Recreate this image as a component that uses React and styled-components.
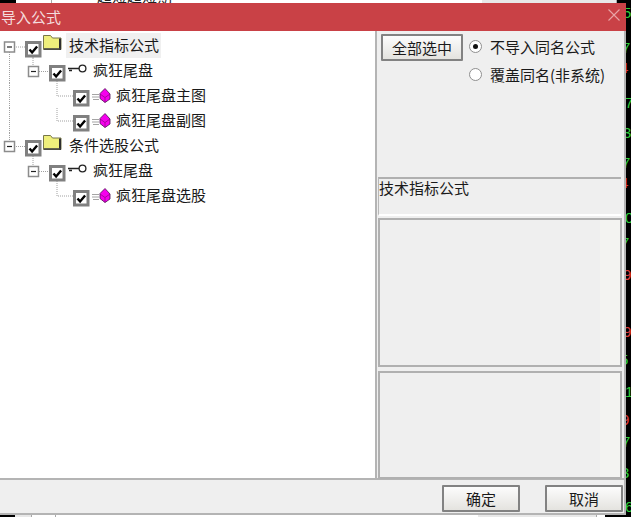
import React from "react";
import styled, { createGlobalStyle } from "styled-components";

const Global = createGlobalStyle`
  html, body { margin: 0; padding: 0; background: #000; }
  body { width: 631px; height: 517px; overflow: hidden; font-family: "Noto Sans CJK SC", "Liberation Sans", sans-serif; }
`;

const Page = styled.div`
  width: 631px;
  height: 517px;
  display: flex;
  flex-direction: column;
  background: #000;
  overflow: hidden;
`;
const Peek = styled.div`
  height: ${p => p.$h}px;
  flex: none;
  display: flex;
  overflow: hidden;
`;
const PeekCell = styled.div`
  width: ${p => p.$w}px;
  flex: none;
  box-sizing: border-box;
  background: ${p => p.$bg};
  border-right: ${p => (p.$tick ? "1px solid #a8a8a8" : "none")};
`;
const PeekText = styled.div`
  width: ${p => p.$w}px;
  flex: none;
  background: #fff;
  color: #222;
  font-size: 15px;
  line-height: 15px;
  margin-top: -12px;
  height: 15px;
  white-space: nowrap;
`;
const Middle = styled.div`
  display: flex;
  height: 512px;
  flex: none;
`;
const Dialog = styled.div`
  width: 626px;
  flex: none;
  display: flex;
  flex-direction: column;
  background: #efefef;
`;
const Ticker = styled.div`
  width: 5px;
  flex: none;
  background: #000;
  overflow: hidden;
`;
const Digit = styled.div`
  color: ${p => p.$c};
  font: 15px "Liberation Sans", sans-serif;
  line-height: 16px;
  height: 16px;
  margin-top: ${p => p.$gap}px;
  margin-left: ${p => p.$left}px;
`;
const TitleBar = styled.div`
  height: 28px;
  flex: none;
  background: #c94146;
  color: #f4dcdd;
  font-size: 15px;
  line-height: 26px;
  padding: 0 6px 0 1px;
  display: flex;
  align-items: center;
  justify-content: space-between;
`;
const Close = styled.svg`
  width: 12px;
  height: 12px;
  margin-bottom: 4px;
`;
const Content = styled.div`
  flex: 1;
  display: flex;
  flex-direction: column;
  border-right: 2px solid #b4b4b4;
`;
const Body = styled.div`
  height: 449px;
  flex: none;
  display: flex;
  border-bottom: 2px solid #b4b4b4;
  box-sizing: border-box;
`;
const TreePanel = styled.div`
  width: 377px;
  flex: none;
  box-sizing: border-box;
  background: #fff;
  border-right: 2px solid #b4b4b4;
  padding-top: 2px;
`;
const Row = styled.div`
  height: 25px;
  display: flex;
  align-items: flex-start;
  font-size: 15px;
  color: #1a1a1a;
`;
const Guide = styled.svg`
  flex: none;
  height: 25px;
  display: block;
  overflow: visible;
`;
const Label = styled.span`
  height: 25px;
  line-height: 24px;
  padding: 0 2px 0 3px;
  white-space: nowrap;
  background: ${p => (p.$selected ? "#f0f0f0" : "transparent")};
`;
const RightPanel = styled.div`
  flex: 1;
  display: flex;
  flex-direction: column;
  padding: 3px 0 0 1px;
`;
const OptionsRow = styled.div`
  height: 143px;
  flex: none;
  display: flex;
  padding-left: 3px;
`;
const PushButton = styled.button`
  width: ${p => p.$w}px;
  height: 27px;
  padding: 0;
  box-sizing: border-box;
  border: 2px solid #828282;
  border-radius: 1px;
  background: linear-gradient(#fcfcfc, #e4e3df);
  color: #1a1a1a;
  font: 15px "Noto Sans CJK SC", sans-serif;
  line-height: 22px;
`;
const RadioColumn = styled.div`
  margin-left: 6px;
  display: flex;
  flex-direction: column;
  gap: 3px;
`;
const RadioRow = styled.div`
  height: 25px;
  display: flex;
  align-items: center;
  gap: 8px;
  font-size: 15px;
  color: #1a1a1a;
  white-space: nowrap;
`;
const RadioDot = styled.span`
  width: 13px;
  height: 13px;
  box-sizing: border-box;
  border-radius: 50%;
  border: 1.5px solid #8f8f8f;
  background: #fff;
  display: flex;
  align-items: center;
  justify-content: center;
  &::after {
    content: "";
    width: 5px;
    height: 5px;
    border-radius: 50%;
    background: ${p => (p.$on ? "#111" : "transparent")};
  }
`;
const Group = styled.div`
  width: 243px;
  height: 39px;
  flex: none;
  box-sizing: border-box;
  border-top: 2px solid #b0b0b0;
  border-left: 1px solid #b8b8b8;
  border-bottom: 2px solid #fff;
  font-size: 15px;
  line-height: 17px;
  color: #1a1a1a;
`;
const Well = styled.div`
  margin-top: ${p => p.$top}px;
  height: ${p => p.$h}px;
  width: 244px;
  flex: none;
  box-sizing: border-box;
  border: 2px solid #b0b0b0;
  display: flex;
  justify-content: flex-end;
  background: #efefef;
`;
const WellStrip = styled.div`
  width: 20px;
  background: #f3f3f1;
`;
const Footer = styled.div`
  flex: 1;
  display: flex;
  justify-content: flex-end;
  align-items: flex-start;
  gap: 25px;
  padding: 5px 1px 0 0;
  border-bottom: 2px solid #b4b4b4;
`;

const Expander = ({ x, y = 8 }) => (
  <g>
    <rect x={x + 0.5} y={y + 0.5} width="10" height="10" fill="#fff" stroke="#8c8c8c" strokeWidth="1.5" />
    <path d={`M${x + 3} ${y + 5.5}h5`} stroke="#222" strokeWidth="1.2" />
  </g>
);
const Dots = ({ d }) => <path d={d} stroke="#a0a0a0" strokeWidth="1" strokeDasharray="1 1" fill="none" />;
const Check = ({ x, y = 7.5 }) => (
  <g>
    <rect x={x + 1.5} y={y + 1} width="13.5" height="13.5" fill="#fff" stroke="#808080" strokeWidth="3" />
    <path d={`M${x + 4.5} ${y + 8}l2.6 3l5 -6`} stroke="#000" strokeWidth="2.4" fill="none" />
  </g>
);
const Folder = ({ x }) => (
  <g>
    <path d={`M${x + 0.5} 2.5h7l2 2.5h8.5v11.5h-17.5z`} fill="#efef7c" stroke="#77774a" />
    <path d={`M${x + 17} 5.5v11.5`} stroke="#2e2e2e" strokeWidth="2" />
    <path d={`M${x + 1} 16h16.5`} stroke="#444" strokeWidth="1.6" />
  </g>
);
const KeyIcon = ({ x }) => (
  <g>
    <path d={`M${x} 10.5h12M${x + 1} 12.5h3`} stroke="#222" strokeWidth="1.3" />
    <circle cx={x + 14.5} cy="10.5" r="3.4" fill="#fff" stroke="#222" strokeWidth="1.3" />
  </g>
);
const Gem = ({ x }) => (
  <g>
    <path d={`M${x} 11.5h7M${x} 14h7M${x + 1} 16.5h6`} stroke="#a4a4a4" strokeWidth="1" />
    <path d={`M${x + 13} 5.5l5 5.5v5l-5 3.5l-5 -4v-5z`} fill="#f600ee" stroke="#4a1050" strokeWidth="0.8" />
    <path d={`M${x + 8} 11l5 3.5l5 -3.5M${x + 13} 14.5v5`} stroke="#8a0a80" strokeWidth="0.7" fill="none" />
  </g>
);

const TreeRow = ({ width, label, selected, children }) => (
  <Row>
    <Guide width={width} viewBox={`0 0 ${width} 25`}>{children}</Guide>
    <Label $selected={selected}>{label}</Label>
  </Row>
);

const G = "#2fcf3a";
const R = "#e23c3c";
const ticker = [
  ["5", G, 2, -3], ["7", G, 19, -4], ["4", R, 4, -6], ["7", G, 19, -1], ["3", G, 14, -3], ["7", G, 14, -4], ["4", R, 4, -6],
  ["0", G, 19, -1], ["7", G, 9, -5], ["9", R, 16, -3], ["9", R, 41, -3], ["5", G, 12, -6], ["1", G, 16, -1], ["9", R, 12, -5],
  ["7", G, 6, -4], ["3", G, 15, -5], ["6", G, 18, -1],
];

export default function App() {
  return (
    <Page>
      <Global />
      <Peek $h={3}>
        <PeekCell $w={16} $bg="#000" />
        <PeekCell $w={36} $bg="#fff" $tick />
        <PeekCell $w={45} $bg="#fff" />
        <PeekText $w={385}>超短超短期</PeekText>
        <PeekCell $w={135} $bg="#e8e8e8" $tick />
        <PeekCell $w={14} $bg="#000" />
      </Peek>
      <Middle>
        <Dialog>
          <TitleBar>
            导入公式
            <Close viewBox="0 0 12 12"><path d="M0.5 0.5l11 11M11.5 0.5l-11 11" stroke="#e8a4a6" strokeWidth="1.1" /></Close>
          </TitleBar>
          <Content>
            <Body>
              <TreePanel>
                <TreeRow width={66} label="技术指标公式" selected>
                  <Dots d="M9.5 19V25M16 14h9M33 24V25" />
                  <Expander x={4} y={8.5} />
                  <Check x={25} y={8.5} />
                  <Folder x={43} />
                </TreeRow>
                <TreeRow width={90} label="疯狂尾盘">
                  <Dots d="M9.5 0V25M33 0V8M39 13.5h10M57 23V25" />
                  <Expander x={28} />
                  <Check x={49} />
                  <KeyIcon x={68} />
                </TreeRow>
                <TreeRow width={113} label="疯狂尾盘主图">
                  <Dots d="M9.5 0V25M57 0V13H73" />
                  <Check x={73} />
                  <Gem x={92} />
                </TreeRow>
                <TreeRow width={113} label="疯狂尾盘副图">
                  <Dots d="M9.5 0V25M57 0V13H73" />
                  <Check x={73} />
                  <Gem x={92} />
                </TreeRow>
                <TreeRow width={66} label="条件选股公式">
                  <Dots d="M9.5 0V8M16 13.5h9M33 23V25" />
                  <Expander x={4} />
                  <Check x={25} />
                  <Folder x={43} />
                </TreeRow>
                <TreeRow width={90} label="疯狂尾盘">
                  <Dots d="M33 0V8M39 13.5h10M57 23V25" />
                  <Expander x={28} />
                  <Check x={49} />
                  <KeyIcon x={68} />
                </TreeRow>
                <TreeRow width={113} label="疯狂尾盘选股">
                  <Dots d="M57 0V13H73" />
                  <Check x={73} />
                  <Gem x={92} />
                </TreeRow>
              </TreePanel>
              <RightPanel>
                <OptionsRow>
                  <PushButton $w={82}>全部选中</PushButton>
                  <RadioColumn>
                    <RadioRow><RadioDot $on />不导入同名公式</RadioRow>
                    <RadioRow><RadioDot />覆盖同名(非系统)</RadioRow>
                  </RadioColumn>
                </OptionsRow>
                <Group>技术指标公式</Group>
                <Well $top={2} $h={149}><WellStrip /></Well>
                <Well $top={4} $h={108}><WellStrip /></Well>
              </RightPanel>
            </Body>
            <Footer>
              <PushButton $w={78}>确定</PushButton>
              <PushButton $w={78}>取消</PushButton>
            </Footer>
          </Content>
        </Dialog>
        <Ticker>
          {ticker.map(([d, c, gap, left], i) => <Digit key={i} $c={c} $gap={gap} $left={left}>{d}</Digit>)}
        </Ticker>
      </Middle>
      <Peek $h={2}>
        <PeekCell $w={15} $bg="#000" />
        <PeekCell $w={17} $bg="#e8e8e8" $tick />
        <PeekCell $w={24} $bg="#fff" $tick />
        <PeekCell $w={422} $bg="#fff" />
        <PeekCell $w={119} $bg="#e8e8e8" $tick />
        <PeekCell $w={8} $bg="#fff" />
        <PeekCell $w={26} $bg="#000" />
      </Peek>
    </Page>
  );
}
